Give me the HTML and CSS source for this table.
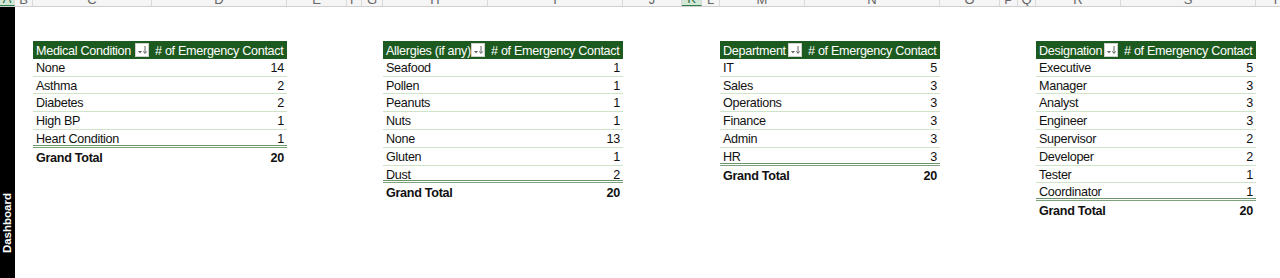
FILE: index.html
```html
<!DOCTYPE html>
<html>
<head>
<meta charset="utf-8">
<link rel="stylesheet" href="styles.css">
</head>
<body>
<div class="sheet">
  <div class="colhead">
    <div class="ch sel" style="width:15px">A</div>
    <div class="ch" style="width:18px">B</div>
    <div class="ch" style="width:119px">C</div>
    <div class="ch" style="width:135px">D</div>
    <div class="ch" style="width:60px">E</div>
    <div class="ch" style="width:15px">F</div>
    <div class="ch" style="width:21px">G</div>
    <div class="ch" style="width:105px">H</div>
    <div class="ch" style="width:135px">I</div>
    <div class="ch" style="width:59px">J</div>
    <div class="ch sel" style="width:20px">K</div>
    <div class="ch" style="width:18px">L</div>
    <div class="ch" style="width:85px">M</div>
    <div class="ch" style="width:135px">N</div>
    <div class="ch" style="width:60px">O</div>
    <div class="ch" style="width:18px">P</div>
    <div class="ch" style="width:18px">Q</div>
    <div class="ch" style="width:85px">R</div>
    <div class="ch" style="width:135px">S</div>
    <div class="ch" style="width:40px">T</div>
  </div>
  <div class="body">
    <div class="sidebar"><span class="vlabel">Dashboard</span></div>
    <div class="canvas">
      <div class="pivot p1">
        <div class="hd first"><span>Medical Condition</span><span class="fbtn"><svg width="14" height="14" viewBox="0 0 14 14"><rect x="0.5" y="0.5" width="13" height="13" fill="#fff" stroke="#d0d0d0"/><path d="M3 8 L7 8 L5 10.5 Z" fill="#666"/><path d="M10 3 L10 10" stroke="#666" stroke-width="1"/><path d="M8.3 8.3 L10 10.5 L11.7 8.3" fill="none" stroke="#666" stroke-width="1"/></svg></span></div>
        <div class="hd">&#35; of Emergency Contact</div>
        <div class="c">None</div><div class="c n">14</div>
        <div class="c">Asthma</div><div class="c n">2</div>
        <div class="c">Diabetes</div><div class="c n">2</div>
        <div class="c">High BP</div><div class="c n">1</div>
        <div class="c last">Heart Condition</div><div class="c n last">1</div>
        <div class="c tot">Grand Total</div><div class="c n tot">20</div>
      </div>
      <div class="pivot p2">
        <div class="hd first"><span>Allergies (if any)</span><span class="fbtn"><svg width="14" height="14" viewBox="0 0 14 14"><rect x="0.5" y="0.5" width="13" height="13" fill="#fff" stroke="#d0d0d0"/><path d="M3 8 L7 8 L5 10.5 Z" fill="#666"/><path d="M10 3 L10 10" stroke="#666" stroke-width="1"/><path d="M8.3 8.3 L10 10.5 L11.7 8.3" fill="none" stroke="#666" stroke-width="1"/></svg></span></div>
        <div class="hd">&#35; of Emergency Contact</div>
        <div class="c">Seafood</div><div class="c n">1</div>
        <div class="c">Pollen</div><div class="c n">1</div>
        <div class="c">Peanuts</div><div class="c n">1</div>
        <div class="c">Nuts</div><div class="c n">1</div>
        <div class="c">None</div><div class="c n">13</div>
        <div class="c">Gluten</div><div class="c n">1</div>
        <div class="c last">Dust</div><div class="c n last">2</div>
        <div class="c tot">Grand Total</div><div class="c n tot">20</div>
      </div>
      <div class="pivot p3">
        <div class="hd first"><span>Department</span><span class="fbtn"><svg width="14" height="14" viewBox="0 0 14 14"><rect x="0.5" y="0.5" width="13" height="13" fill="#fff" stroke="#d0d0d0"/><path d="M3 8 L7 8 L5 10.5 Z" fill="#666"/><path d="M10 3 L10 10" stroke="#666" stroke-width="1"/><path d="M8.3 8.3 L10 10.5 L11.7 8.3" fill="none" stroke="#666" stroke-width="1"/></svg></span></div>
        <div class="hd">&#35; of Emergency Contact</div>
        <div class="c">IT</div><div class="c n">5</div>
        <div class="c">Sales</div><div class="c n">3</div>
        <div class="c">Operations</div><div class="c n">3</div>
        <div class="c">Finance</div><div class="c n">3</div>
        <div class="c">Admin</div><div class="c n">3</div>
        <div class="c last">HR</div><div class="c n last">3</div>
        <div class="c tot">Grand Total</div><div class="c n tot">20</div>
      </div>
      <div class="pivot p4">
        <div class="hd first"><span>Designation</span><span class="fbtn"><svg width="14" height="14" viewBox="0 0 14 14"><rect x="0.5" y="0.5" width="13" height="13" fill="#fff" stroke="#d0d0d0"/><path d="M3 8 L7 8 L5 10.5 Z" fill="#666"/><path d="M10 3 L10 10" stroke="#666" stroke-width="1"/><path d="M8.3 8.3 L10 10.5 L11.7 8.3" fill="none" stroke="#666" stroke-width="1"/></svg></span></div>
        <div class="hd">&#35; of Emergency Contact</div>
        <div class="c">Executive</div><div class="c n">5</div>
        <div class="c">Manager</div><div class="c n">3</div>
        <div class="c">Analyst</div><div class="c n">3</div>
        <div class="c">Engineer</div><div class="c n">3</div>
        <div class="c">Supervisor</div><div class="c n">2</div>
        <div class="c">Developer</div><div class="c n">2</div>
        <div class="c">Tester</div><div class="c n">1</div>
        <div class="c last">Coordinator</div><div class="c n last">1</div>
        <div class="c tot">Grand Total</div><div class="c n tot">20</div>
      </div>
    </div>
  </div>
</div>
</body>
</html>
```
FILE: styles.css
```css
* { box-sizing: border-box; }
html, body { margin: 0; padding: 0; background: #fff; }
body { width: 1280px; height: 278px; overflow: hidden; font-family: "Liberation Sans", Arial, sans-serif; }
.sheet { display: flex; flex-direction: column; height: 278px; }
.colhead { display: flex; height: 7px; background: #f5f5f5; border-bottom: 1px solid #cfcfcf; overflow: hidden; flex: none; }
.ch { flex: none; display: flex; justify-content: center; align-items: flex-end; border-right: 1px solid #d9d9d9; font-size: 13px; line-height: 13px; color: #666; }
.ch.sel { background: #d3e7d7; border-bottom: 1px solid #2f7d4a; color: #2f6f3f; }
.body { display: flex; flex: 1; }
.sidebar { width: 15px; flex: none; background: #000; display: flex; align-items: flex-end; justify-content: center; padding-bottom: 25px; }
.vlabel { writing-mode: vertical-rl; transform: rotate(180deg); color: #fff; font-weight: bold; font-size: 11.5px; line-height: 15px; }
.canvas { display: flex; align-items: flex-start; gap: 96px; padding: 34px 0 0 18px; }
.pivot { display: grid; grid-auto-rows: 17.8px; font-size: 12.6px; letter-spacing: -0.3px; color: #111; }
.p1 { grid-template-columns: 119px 135px; }
.p2 { grid-template-columns: 105px 135px; }
.p3 { grid-template-columns: 85px 135px; margin-left: 1px; }
.p4 { grid-template-columns: 85px 135px; }
.hd { background: #1d5a1f; color: #fff; display: flex; align-items: center; padding: 2px 0 0 3px; white-space: nowrap; }
.hd.first { justify-content: space-between; padding-right: 3px; }
.fbtn { display: flex; align-items: center; margin-top: -2px; }
.fbtn svg { display: block; }
.c { display: flex; align-items: flex-start; padding: 2px 3px 0; line-height: 15px; white-space: nowrap;
     background: linear-gradient(#cfe3c9, #cfe3c9) left bottom / 100% 1px no-repeat; }
.c.n { justify-content: flex-end; }
.c.last { background: linear-gradient(#7ea27e, #7ea27e) left bottom / 100% 1px no-repeat,
                      linear-gradient(#6b956b, #6b956b) left calc(100% - 2px) / 100% 1px no-repeat; }
.c.tot { font-weight: bold; background: none; padding-top: 3px; }
```
